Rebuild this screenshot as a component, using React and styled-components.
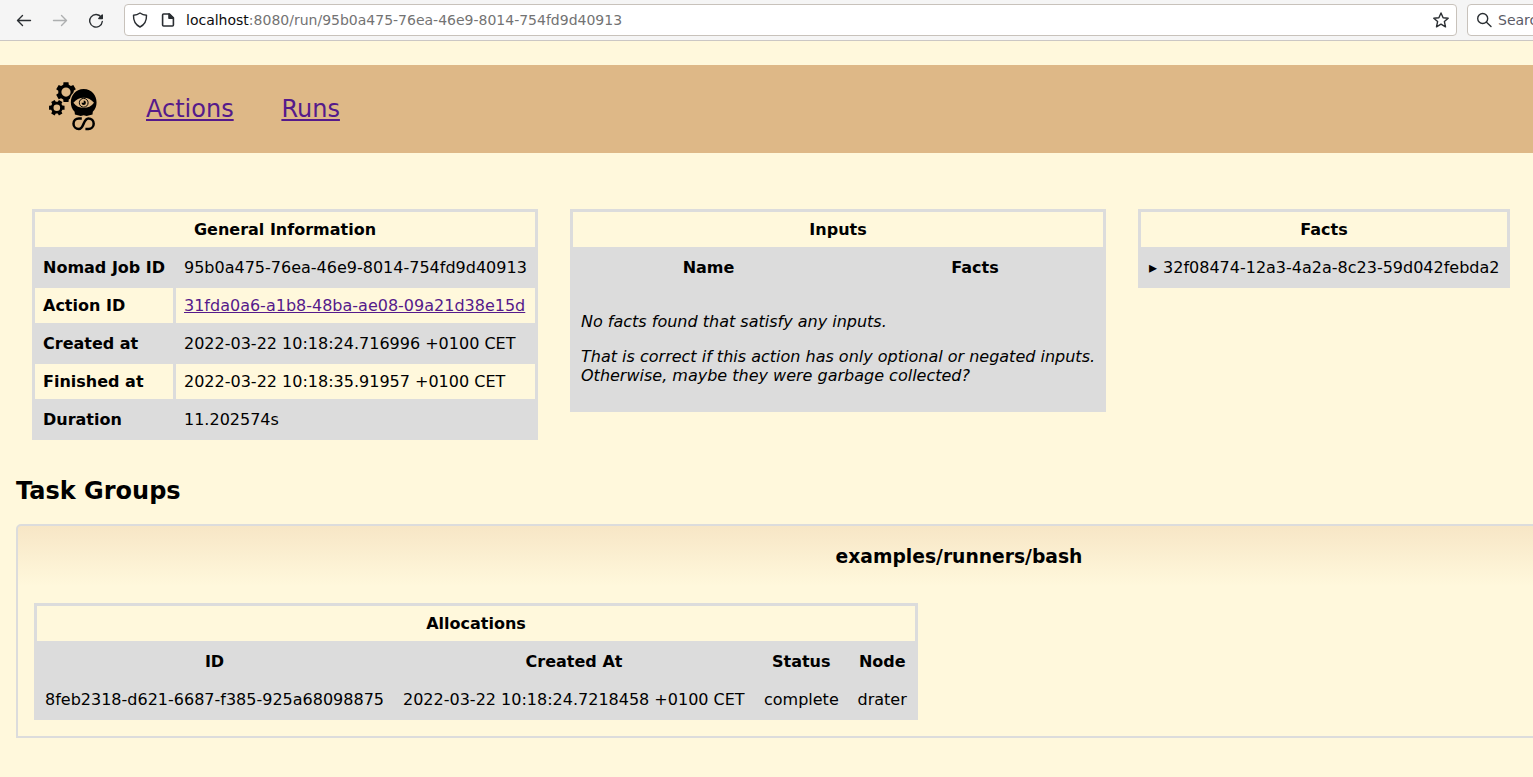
import React from "react";
import styled, { createGlobalStyle } from "styled-components";

const Global = createGlobalStyle`
  html, body { margin: 0; height: 100%; overflow: hidden; background: #fff8dc; }
  body { font: 16px/19px "DejaVu Sans", sans-serif; color: #000; }
`;

const Toolbar = styled.div`
  display: flex;
  align-items: center;
  height: 40px;
  width: 1667px;
  background: #f5f5f5;
  border-bottom: 1px solid #cbc7c4;
  font-size: 14px;
`;
const ToolButton = styled.span`
  display: flex;
  width: 16px;
  height: 16px;
  margin-left: ${(p) => p.$gap}px;
  opacity: ${(p) => (p.$disabled ? 0.35 : 1)};
`;
const Field = styled.div`
  box-sizing: border-box;
  display: flex;
  align-items: center;
  height: 32px;
  width: ${(p) => p.$width}px;
  margin-left: ${(p) => p.$gap}px;
  padding: 0 ${(p) => p.$pad || 7}px;
  background: #fff;
  border: 1px solid #c8c2bb;
  border-radius: 4px;
  color: #5b5b66;
`;
const Url = styled.span`
  flex: 1;
  margin-left: 10px;
  color: #737373;
  b { font-weight: normal; color: #0c0c0d; }
`;
const Hint = styled.span`margin-left: 6px;`;

const Nav = styled.nav`
  display: flex;
  align-items: center;
  gap: 48px;
  width: 1918px;
  height: 88px;
  box-sizing: border-box;
  margin-top: 24px;
  padding: 0 48px;
  background: #deb887;
  font-size: 24px;
  line-height: 28px;
`;
const Link = styled.a`
  color: #551a8b;
  text-decoration: underline;
`;
const NavLink = styled(Link)`
  width: 87.400px;
  white-space: nowrap;
`;
const Logo = styled.svg`
  width: 50px;
  height: 50px;
  margin-top: -4px;
`;

const Summary = styled.section`
  display: flex;
  align-items: flex-start;
  gap: 32px;
  width: 1886px;
  padding: 56px 32px 0;
`;
const Table = styled.table`
  table-layout: fixed;
  width: ${(p) => p.$width}px;
  border-spacing: 3px;
  background: #dcdcdc;
  th, td { padding: 8px; white-space: nowrap; }
  td { text-align: left; }
`;
const Row = styled.tr`
  th, td { background: ${(p) => (p.$light ? "#fff8dc" : "#dcdcdc")}; }
`;
const Label = styled.th`text-align: left;`;
const Marker = styled.span`
  display: inline-block;
  width: 14px;
`;
const Note = styled.p`
  margin: 16px 0;
  font-style: italic;
`;
const Heading = styled.h2`
  margin: 37px 16px 19px;
  font-size: 24px;
  line-height: 28px;
`;
const Group = styled.section`
  box-sizing: border-box;
  width: 1886px;
  height: 214px;
  margin-left: 16px;
  padding: 19px 16px 14px;
  border: 2px solid #dcdcdc;
  border-radius: 5px 5px 0 0;
  background: linear-gradient(#f7e6c6, #fff8dc 60px);
`;
const GroupTitle = styled.h3`
  margin: 0 0 35px;
  text-align: center;
  font-size: 18.72px;
  line-height: 23px;
`;

const Stroke = ({ children, w = 1.4 }) => (
  <svg width="16" height="16" viewBox="0 0 16 16" fill="none" stroke="#2a2e32" strokeWidth={w} strokeLinecap="round" strokeLinejoin="round">
    {children}
  </svg>
);

const Columns = ({ widths }) => (
  <colgroup>{widths.map((w, i) => <col key={i} width={w} />)}</colgroup>
);

const gearPath = (cx, cy, r, inner, teeth, turn) => {
  const pts = [];
  for (let i = 0; i < teeth; i++) {
    const a = turn + (i * 2 * Math.PI) / teeth;
    [[-0.36, inner], [-0.25, r], [0.25, r], [0.36, inner]].forEach(([d, q]) =>
      pts.push(`${(cx + q * Math.cos(a + d)).toFixed(2)} ${(cy + q * Math.sin(a + d)).toFixed(2)}`)
    );
  }
  return `M${pts.join("L")}Z`;
};
const hole = (cx, cy, r) => `M${cx - r} ${cy}a${r} ${r} 0 1 0 ${2 * r} 0a${r} ${r} 0 1 0 ${-2 * r} 0Z`;

const BrandLogo = () => (
  <Logo viewBox="0 0 50 50" fillRule="evenodd">
    <path d={gearPath(18, 10.1, 10.2, 7.8, 6, Math.PI / 2) + hole(18, 10.1, 4.6)} />
    <path d={gearPath(8.8, 25.7, 8, 6, 6, 0) + hole(8.8, 25.7, 3.3)} />
    <circle cx="35.7" cy="20.6" r="14.4" fill="#deb887" />
    <path d="M26.6 29.800C19.200 22.500 23 7.100 35.700 7.100S52.200 22.500 44.800 29.800L44.500 32.600L41.500 33.200L38.700 34L35.700 33.200L32.700 34L29.900 33.200L26.900 32.600Z" />
    <path d="M25.400 20.800C30.200 13.900 41.200 13.900 46 20.800C41.200 27.700 30.200 27.700 25.400 20.800Z" fill="#deb887" />
    <circle cx="35.700" cy="20.800" r="4.400" fill="none" stroke="#000" strokeWidth="1" />
    <path d="M35.700 18.600a2.200 2.200 0 1 1 -2.200 2.200h2.200Z" />
    <path d="M33.800 36.400H30.800A5.300 5.300 0 0 0 30.800 47C36.200 47 35 36.400 40.400 36.400A5.300 5.300 0 0 1 40.400 47H37.400" fill="none" stroke="#000" strokeWidth="2.500" />
  </Logo>
);

const details = [
  ["Nomad Job ID", "95b0a475-76ea-46e9-8014-754fd9d40913"],
  ["Action ID", <Link key="action" href="#">31fda0a6-a1b8-48ba-ae08-09a21d38e15d</Link>],
  ["Created at", "2022-03-22 10:18:24.716996 +0100 CET"],
  ["Finished at", "2022-03-22 10:18:35.91957 +0100 CET"],
  ["Duration", "11.202574s"],
];

export default function App() {
  return (
    <>
      <Global />
      <Toolbar>
        <ToolButton $gap={16}><Stroke><path d="M1.500 8.500H14.500M6.500 3.500L1.500 8.500L6.500 13.500" /></Stroke></ToolButton>
        <ToolButton $gap={20} $disabled><Stroke><path d="M1.500 8.500H14.500M9.500 3.500L14.500 8.500L9.500 13.500" /></Stroke></ToolButton>
        <ToolButton $gap={20}><Stroke><path d="M13.200 5.200A6.300 6.300 0 1 0 14.300 9.500" /><path d="M14.300 3V6.500H10.800Z" fill="#2a2e32" /></Stroke></ToolButton>
        <Field $width={1333} $gap={20}>
          <Stroke><path d="M8 1C10 2.400 12 3.100 14.500 3.300C14.700 8.600 12.600 12.800 8 15C3.400 12.800 1.300 8.600 1.500 3.300C4 3.100 6 2.400 8 1Z" /></Stroke>
          <ToolButton $gap={12}><Stroke w={1.6}><path d="M3.600 2H9.500L13.400 5.900V13Q13.400 14 12.400 14H3.600Q2.600 14 2.600 13V3Q2.600 2 3.600 2Z" /><path d="M9 2V6.300H13.300Z" fill="#2a2e32" /></Stroke></ToolButton>
          <Url><b>localhost</b>:8080/run/95b0a475-76ea-46e9-8014-754fd9d40913</Url>
          <Stroke><path d="M8 1L10.100 5.700L15.200 6.200L11.400 9.600L12.500 14.800L8 12.100L3.500 14.800L4.600 9.600L.8 6.200L5.900 5.700Z" /></Stroke>
        </Field>
        <Field $width={190} $gap={10} $pad={8}>
          <Stroke><circle cx="6.700" cy="6.500" r="5" /><path d="M10.500 10.300L15 14.500" /></Stroke>
          <Hint>Search</Hint>
        </Field>
      </Toolbar>
      <Nav>
        <BrandLogo />
        <NavLink href="#">Actions</NavLink>
        <NavLink href="#">Runs</NavLink>
      </Nav>
      <Summary>
        <Table $width={506}>
          <Columns widths={[138, 359]} />
          <tbody>
            <Row $light><th colSpan={2}>General Information</th></Row>
            {details.map(([label, value], i) => (
              <Row key={label} $light={i % 2 === 1}><Label>{label}</Label><td>{value}</td></Row>
            ))}
          </tbody>
        </Table>
        <Table $width={536}>
          <Columns widths={[271, 256]} />
          <tbody>
            <Row $light><th colSpan={2}>Inputs</th></Row>
            <Row><th>Name</th><th>Facts</th></Row>
            <Row>
              <td colSpan={2}>
                <Note>No facts found that satisfy any inputs.</Note>
                <Note>That is correct if this action has only optional or negated inputs.<br />Otherwise, maybe they were garbage collected?</Note>
              </td>
            </Row>
          </tbody>
        </Table>
        <Table $width={372}>
          <tbody>
            <Row $light><th>Facts</th></Row>
            <Row><td><Marker>▸</Marker>32f08474-12a3-4a2a-8c23-59d042febda2</td></Row>
          </tbody>
        </Table>
      </Summary>
      <Heading>Task Groups</Heading>
      <Group>
        <GroupTitle>examples/runners/bash</GroupTitle>
        <Table $width={884}>
          <Columns widths={[355, 358, 90.5, 65.5]} />
          <tbody>
            <Row $light><th colSpan={4}>Allocations</th></Row>
            <Row><th>ID</th><th>Created At</th><th>Status</th><th>Node</th></Row>
            <Row><td>8feb2318-d621-6687-f385-925a68098875</td><td>2022-03-22 10:18:24.7218458 +0100 CET</td><td>complete</td><td>drater</td></Row>
          </tbody>
        </Table>
      </Group>
    </>
  );
}
